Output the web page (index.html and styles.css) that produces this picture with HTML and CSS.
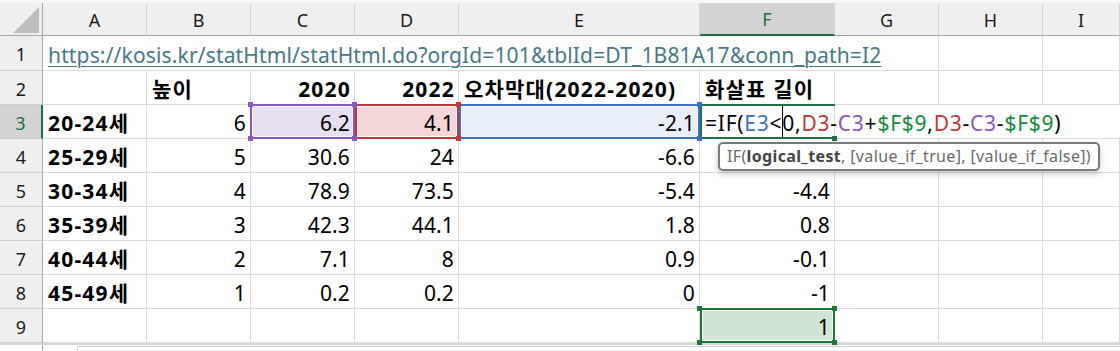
FILE: index.html
```html
<!DOCTYPE html>
<html lang="ko">
<head>
<meta charset="utf-8">
<title>Sheet</title>
<link rel="stylesheet" href="styles.css">
</head>
<body>
<div class="app">
  <div class="strip"></div>
  <div class="sheet">
    <div class="ch corner"><svg width="42" height="32" viewBox="0 0 42 32"><polygon points="13,30 39,30 39,4" fill="#bdbdbd"/></svg></div>
    <div class="ch">A</div>
    <div class="ch">B</div>
    <div class="ch">C</div>
    <div class="ch">D</div>
    <div class="ch">E</div>
    <div class="ch sel">F</div>
    <div class="ch">G</div>
    <div class="ch">H</div>
    <div class="ch">I</div>

    <div class="rh">1</div>
    <div class="c span7"><a class="link">https://kosis.kr/statHtml/statHtml.do?orgId=101&amp;tblId=DT_1B81A17&amp;conn_path=I2</a></div>
    <div class="c"></div>
    <div class="c"></div>

    <div class="rh">2</div>
    <div class="c"></div>
    <div class="c b">높이</div>
    <div class="c b r">2020</div>
    <div class="c b r">2022</div>
    <div class="c b">오차막대(2022-2020)</div>
    <div class="c b">화살표 길이</div>
    <div class="c"></div>
    <div class="c"></div>
    <div class="c"></div>

    <div class="rh sel">3</div>
    <div class="c b">20-24세</div>
    <div class="c r">6</div>
    <div class="c r ref ref-c">6.2<span class="hd tl"></span><span class="hd tr"></span><span class="hd bl"></span><span class="hd br"></span></div>
    <div class="c r ref ref-d nl">4.1<span class="hd tr"></span><span class="hd br"></span></div>
    <div class="c r ref ref-e nl">-2.1<span class="hd tr"></span><span class="hd br"></span></div>
    <div class="c ref edit nl"><span class="formula">=IF(<span class="k-e">E3</span>&lt;<span class="caret"></span>0,<span class="k-d">D3</span>-<span class="k-c">C3</span>+<span class="k-f">$F$9</span>,<span class="k-d">D3</span>-<span class="k-c">C3</span>-<span class="k-f">$F$9</span>)</span><span class="hd br"></span></div>
    <div class="c over"></div>
    <div class="c over"></div>
    <div class="c over"></div>

    <div class="rh">4</div>
    <div class="c b">25-29세</div>
    <div class="c r">5</div>
    <div class="c r">30.6</div>
    <div class="c r">24</div>
    <div class="c r">-6.6</div>
    <div class="c r"></div>
    <div class="c"></div>
    <div class="c"></div>
    <div class="c"></div>

    <div class="rh">5</div>
    <div class="c b">30-34세</div>
    <div class="c r">4</div>
    <div class="c r">78.9</div>
    <div class="c r">73.5</div>
    <div class="c r">-5.4</div>
    <div class="c r">-4.4</div>
    <div class="c"></div>
    <div class="c"></div>
    <div class="c"></div>

    <div class="rh">6</div>
    <div class="c b">35-39세</div>
    <div class="c r">3</div>
    <div class="c r">42.3</div>
    <div class="c r">44.1</div>
    <div class="c r">1.8</div>
    <div class="c r">0.8</div>
    <div class="c"></div>
    <div class="c"></div>
    <div class="c"></div>

    <div class="rh">7</div>
    <div class="c b">40-44세</div>
    <div class="c r">2</div>
    <div class="c r">7.1</div>
    <div class="c r">8</div>
    <div class="c r">0.9</div>
    <div class="c r">-0.1</div>
    <div class="c"></div>
    <div class="c"></div>
    <div class="c"></div>

    <div class="rh">8</div>
    <div class="c b">45-49세</div>
    <div class="c r">1</div>
    <div class="c r">0.2</div>
    <div class="c r">0.2</div>
    <div class="c r">0</div>
    <div class="c r">-1</div>
    <div class="c"></div>
    <div class="c"></div>
    <div class="c"></div>

    <div class="rh">9</div>
    <div class="c"></div>
    <div class="c"></div>
    <div class="c"></div>
    <div class="c"></div>
    <div class="c"></div>
    <div class="c r ref ref-f nl">1<span class="hd tl"></span><span class="hd tr"></span><span class="hd bl"></span><span class="hd br"></span></div>
    <div class="c"></div>
    <div class="c"></div>
    <div class="c"></div>

    <div class="tip">IF(<b>logical_test</b>, [value_if_true], [value_if_false])</div>
  </div>
  <div class="foot">
    <div class="f-rh"></div>
    <div class="f-gap"></div>
    <div class="f-bar"></div>
  </div>
</div>
</body>
</html>
```

FILE: styles.css
```css
* { box-sizing: border-box; }
html, body { margin: 0; padding: 0; background: #fff; }
body {
  font-family: "Noto Sans", "Noto Sans CJK KR", sans-serif;
  color: #000;
  width: 1120px;
  height: 351px;
  overflow: hidden;
}
.app { width: 1120px; }
.strip { height: 3px; background: #f7f7f7; }

.sheet {
  position: relative;
  display: grid;
  grid-template-columns: 43px 104px 104px 104px 104px 241px 135px 104px 104px 1fr;
  grid-template-rows: 33px 35px repeat(8, 34px);
}

/* column headers */
.ch {
  background: #efefef;
  border-right: 1px solid #d5d5d5;
  border-bottom: 1px solid #a6a6a6;
  display: flex;
  align-items: center;
  justify-content: center;
  font-size: 18px;
  color: #1a1a1a;
  padding-top: 1px;
}
.ch.corner { border-right: 1px solid #a6a6a6; padding: 0; align-items: stretch; justify-content: stretch; }
.ch.corner svg { display: block; }
.ch.sel {
  background: #d3d3d3;
  color: #1d6b40;
  border-bottom: 2px solid #1e7145;
}

/* row headers */
.rh {
  background: #efefef;
  border-right: 1px solid #a6a6a6;
  border-bottom: 1px solid #cdcdcd;
  display: flex;
  align-items: center;
  justify-content: center;
  font-size: 18px;
  color: #1a1a1a;
  padding-top: 2px;
}
.rh.sel {
  background: #d3d3d3;
  color: #1d6b40;
  border-right: 2px solid #1e7145;
}

/* cells */
.c {
  border-right: 1px solid #dcdcdc;
  border-bottom: 1px solid #dcdcdc;
  display: flex;
  align-items: flex-end;
  padding: 0 4px 2px 5px;
  font-size: 21px;
  line-height: 26px;
  letter-spacing: 0.15px;
  white-space: nowrap;
  min-width: 0;
}
.c.r { justify-content: flex-end; }
.c.b { font-weight: 700; letter-spacing: 1.2px; }
.c.b.r { padding-right: 3px; }
.span7 { grid-column: span 7; }
.c.over { border-right: none; }

.link {
  color: #467886;
  text-decoration: underline;
  text-decoration-thickness: 1px;
  text-underline-offset: 3px;
}

/* referenced / highlighted cells */
.ref { position: relative; --rc: #000; }
.ref::after {
  content: "";
  position: absolute;
  top: -1px; bottom: -1px; left: -1px; right: -1px;
  border: 2px solid var(--rc);
  box-shadow: inset 0 0 0 1px #fff;
  pointer-events: none;
}
.ref.nl::after { left: 0; }
.hd {
  position: absolute;
  width: 5px;
  height: 5px;
  background: var(--rc);
  z-index: 1;
}
.hd.tl { left: -3px; top: -3px; }
.hd.tr { right: -3px; top: -3px; }
.hd.bl { left: -3px; bottom: -3px; }
.hd.br { right: -3px; bottom: -3px; }

.ref-c { --rc: #8a58c1; background: #e5dff0; z-index: 4; }
.ref-d { --rc: #c3363d; background: #f4d6d7; z-index: 3; }
.ref-e { --rc: #3b6fc8; background: #e8eef8; z-index: 2; }
.ref-f { --rc: #1b7a36; background: #d0e6d5; z-index: 2; }
.edit { --rc: #1e7145; background: #fff; z-index: 1; overflow: visible; padding-left: 5px; }
.edit::after { box-shadow: none; border-right: none; }

.formula { position: relative; letter-spacing: 0.75px; }
.k-e { color: #3b6fc8; }
.k-d { color: #c3363d; }
.k-c { color: #8a58c1; }
.k-f { color: #148a3c; }
.caret { position: relative; }
.caret::after {
  content: "";
  position: absolute;
  left: 0;
  top: -4px;
  height: 32px;
  border-left: 1px solid #000;
}

/* tooltip */
.tip {
  position: absolute;
  left: 718px;
  top: 139px;
  width: 382px;
  height: 29px;
  border: 2px solid #7a7a7a;
  border-radius: 5px;
  background: #fff;
  box-shadow: 0 3px 6px rgba(0,0,0,0.22);
  font-size: 16px;
  line-height: 25px;
  letter-spacing: 0.35px;
  color: #6a6a6a;
  padding: 0 0 0 7px;
  white-space: nowrap;
  z-index: 10;
}
.tip b { color: #444; font-weight: 700; }

/* bottom */
.foot {
  display: flex;
  height: 8px;
  border-top: 2px solid #d6d6d6;
}
.f-rh { width: 43px; border-right: 1px solid #a6a6a6; }
.f-gap { width: 34px; }
.f-bar { flex: 1; border-left: 1px solid #d0d0d0; border-top: 1px solid #d0d0d0; margin-top: 1px; }
```
